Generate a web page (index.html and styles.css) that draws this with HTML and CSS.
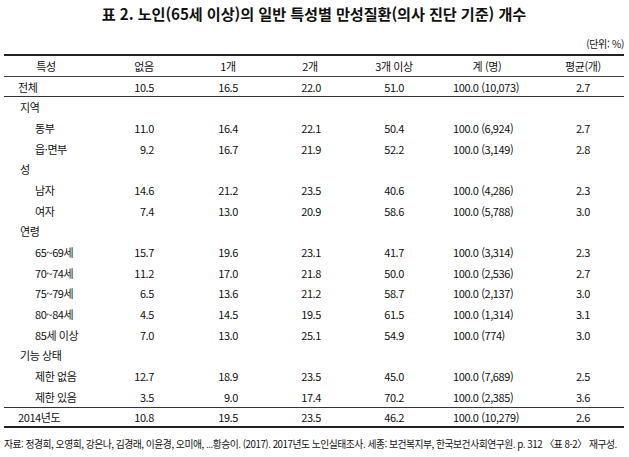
FILE: index.html
```html
<!DOCTYPE html>
<html lang="ko">
<head>
<meta charset="utf-8">
<link rel="stylesheet" href="styles.css">
</head>
<body>
<div class="page">
  <h1 class="title">표 2. 노인(65세 이상)의 일반 특성별 만성질환(의사 진단 기준) 개수</h1>
  <div class="unit">(단위: %)</div>
  <div class="table">
    <div class="row head">
      <div>특성</div><div>없음</div><div>1개</div><div>2개</div><div>3개 이상</div><div>계 (명)</div><div>평균(개)</div>
    </div>
    <div class="row total first">
      <div class="lab">전체</div><div>10.5</div><div>16.5</div><div>22.0</div><div>51.0</div><div>100.0 (10,073)</div><div>2.7</div>
    </div>
    <div class="body">
      <div class="row"><div class="cat">지역</div></div>
      <div class="row"><div class="sub">동부</div><div>11.0</div><div>16.4</div><div>22.1</div><div>50.4</div><div>100.0 (6,924)</div><div>2.7</div></div>
      <div class="row"><div class="sub">읍·면부</div><div>9.2</div><div>16.7</div><div>21.9</div><div>52.2</div><div>100.0 (3,149)</div><div>2.8</div></div>
      <div class="row"><div class="cat">성</div></div>
      <div class="row"><div class="sub">남자</div><div>14.6</div><div>21.2</div><div>23.5</div><div>40.6</div><div>100.0 (4,286)</div><div>2.3</div></div>
      <div class="row"><div class="sub">여자</div><div>7.4</div><div>13.0</div><div>20.9</div><div>58.6</div><div>100.0 (5,788)</div><div>3.0</div></div>
      <div class="row"><div class="cat">연령</div></div>
      <div class="row"><div class="sub">65~69세</div><div>15.7</div><div>19.6</div><div>23.1</div><div>41.7</div><div>100.0 (3,314)</div><div>2.3</div></div>
      <div class="row"><div class="sub">70~74세</div><div>11.2</div><div>17.0</div><div>21.8</div><div>50.0</div><div>100.0 (2,536)</div><div>2.7</div></div>
      <div class="row"><div class="sub">75~79세</div><div>6.5</div><div>13.6</div><div>21.2</div><div>58.7</div><div>100.0 (2,137)</div><div>3.0</div></div>
      <div class="row"><div class="sub">80~84세</div><div>4.5</div><div>14.5</div><div>19.5</div><div>61.5</div><div>100.0 (1,314)</div><div>3.1</div></div>
      <div class="row"><div class="sub">85세 이상</div><div>7.0</div><div>13.0</div><div>25.1</div><div>54.9</div><div>100.0 (774)</div><div>3.0</div></div>
      <div class="row"><div class="cat">기능 상태</div></div>
      <div class="row"><div class="sub">제한 없음</div><div>12.7</div><div>18.9</div><div>23.5</div><div>45.0</div><div>100.0 (7,689)</div><div>2.5</div></div>
      <div class="row"><div class="sub">제한 있음</div><div>3.5</div><div>9.0</div><div>17.4</div><div>70.2</div><div>100.0 (2,385)</div><div>3.6</div></div>
    </div>
    <div class="row total last">
      <div class="lab">2014년도</div><div>10.8</div><div>19.5</div><div>23.5</div><div>46.2</div><div>100.0 (10,279)</div><div>2.6</div>
    </div>
  </div>
  <p class="note">자료: 정경희, 오영희, 강은나, 김경래, 이윤경, 오미애, ...황승이. (2017). 2017년도 노인실태조사. 세종: 보건복지부, 한국보건사회연구원. p. 312 〈표 8-2〉 재구성.</p>
</div>
</body>
</html>
```
FILE: styles.css
```css
html, body {
  margin: 0;
  padding: 0;
  background: #ffffff;
}
body {
  font-family: "Noto Sans CJK KR", "Noto Sans", sans-serif;
  color: #111;
}
.page {
  width: 620px;
  padding: 0 5px 0 4px;
}
.title {
  margin: 0;
  height: 26px;
  font-size: 15.2px;
  line-height: 26px;
  font-weight: 700;
  letter-spacing: -0.1px;
  text-align: center;
  color: #111;
}
.unit {
  margin-top: 11px;
  height: 13px;
  line-height: 13px;
  font-size: 10px;
  text-align: right;
  letter-spacing: -0.3px;
}
.table {
  margin-top: 4px;
  border-top: 2px solid #222;
  border-bottom: 2px solid #222;
  font-size: 11px;
  letter-spacing: -0.4px;
}
.row {
  display: grid;
  grid-template-columns: 84px 112px 56px 108px 60px 126px 74px;
  align-items: center;
  white-space: nowrap;
}
.row > div {
  text-align: right;
}
.row > div:nth-child(1) { text-align: left; }
.row > div:nth-child(2) { padding-right: 46px; }
.row > div:nth-child(3) { padding-right: 18px; }
.row > div:nth-child(4) { padding-right: 43px; }
.row > div:nth-child(5) { padding-right: 20px; }
.row > div:nth-child(6) { text-align: left; padding-left: 29px; }
.row > div:nth-child(7) { padding-right: 34px; }

.head {
  height: 20px;
  border-bottom: 1px solid #444;
}
.head > div:nth-child(n) {
  text-align: center;
  padding: 0;
}
.head > div:nth-child(7) {
  padding-right: 8px;
}
.total {
  height: 19px;
}
.total.first {
  border-bottom: 1px solid #333;
}
.total.last {
  height: 18px;
  border-top: 1px solid #333;
}
.total .lab {
  text-align: center;
  padding-left: 14px;
}
.body .row {
  height: 20.67px;
}
.cat {
  padding-left: 16px;
}
.sub {
  padding-left: 31px;
}
.note {
  margin: 9px 0 0;
  height: 14px;
  line-height: 14px;
  font-size: 9.8px;
  letter-spacing: -0.49px;
  white-space: nowrap;
}
```
